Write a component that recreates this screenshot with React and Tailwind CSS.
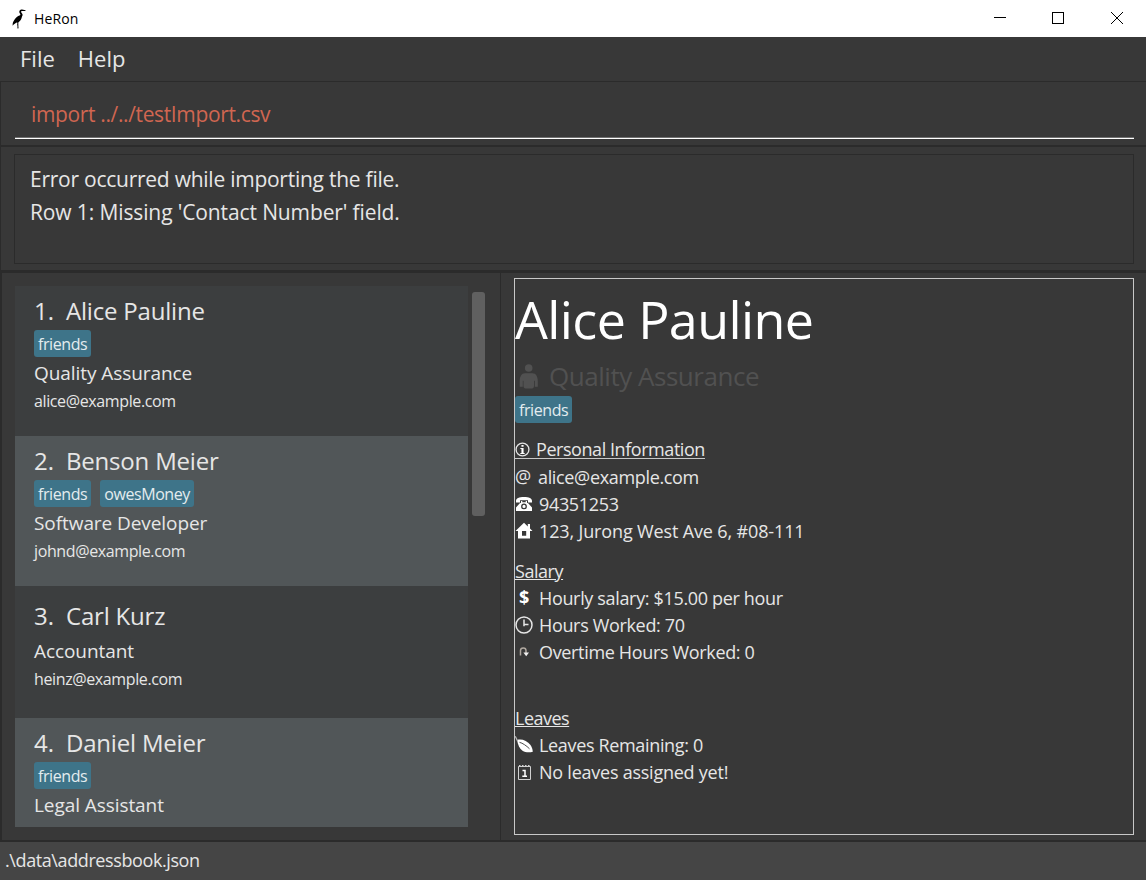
const people = [
  { n: 1, name: 'Alice Pauline', tags: ['friends'], role: 'Quality Assurance', email: 'alice@example.com', box: 'h-[150px] pt-[6px] bg-[#3c3e3f]' },
  { n: 2, name: 'Benson Meier', tags: ['friends', 'owesMoney'], role: 'Software Developer', email: 'johnd@example.com', box: 'h-[150px] pt-[6px] bg-[#515658]' },
  { n: 3, name: 'Carl Kurz', tags: [], role: 'Accountant', email: 'heinz@example.com', box: 'h-[132px] pt-[11px] bg-[#3c3e3f]' },
  { n: 4, name: 'Daniel Meier', tags: ['friends'], role: 'Legal Assistant', email: '', box: 'h-[109px] pt-[6px] bg-[#515658]' },
];

function Tag({ children }) {
  return (
    <span className="flex h-[27px] items-center rounded-[3px] bg-[#3e7489] px-1 text-[16px] leading-none tracking-[-0.42px] text-[#e3ecef]">
      {children}
    </span>
  );
}

function Card({ p }) {
  return (
    <div className={`flex shrink-0 flex-col overflow-hidden pl-[19px] text-[#e6e6e6] ${p.box}`}>
      <div className="flex h-[38px] shrink-0 items-center text-[24px] leading-[38px]">
        <span className="w-8">{p.n}.</span>
        <span className="tracking-[-0.2px]">{p.name}</span>
      </div>
      {p.tags.length > 0 && (
        <div className="flex h-[27px] shrink-0 gap-[9px]">
          {p.tags.map((t) => <Tag key={t}>{t}</Tag>)}
        </div>
      )}
      <div className="h-[32px] shrink-0 text-[19px] leading-[32px] tracking-[-0.07px]">{p.role}</div>
      <div className="h-[25px] shrink-0 text-[16px] leading-[24px] tracking-[-0.38px]">{p.email}</div>
    </div>
  );
}

function Row({ icon, tracking = 'tracking-[-0.34px]', children }) {
  return (
    <div className="flex h-[27px] items-center">
      <span className="flex w-6 shrink-0 items-center">{icon}</span>
      <span className={`whitespace-nowrap pt-[2px] leading-[25px] ${tracking}`}>{children}</span>
    </div>
  );
}

const Heron = () => (
  <svg width="14" height="20" viewBox="0 0 14 20" fill="#000">
    <path d="M7.300 2.600C7.500 1 8.800.3 10 .6L13.500 1.300v.7l-3.300.1C9.100 1.900 8.700 2.800 9.500 3.700c1.200 1.300 1.500 2.400.5 3.900-.4 2.400-1.800 4.700-3.700 5.800l.1 5.200.5.6H4.800l.8-.7-.4-3.200.3-1.500-.8-.2C3 14.500 1.500 15.700.7 16.800c-.3-2.100.2-3.900 1.300-5.400C3.400 9 5.400 7 8.100 6.200c.6-.4.3-1-.2-1.700-.5-.6-.7-1.100-.6-1.900z" />
  </svg>
);

const Person = () => (
  <svg width="20" height="26" viewBox="0 0 20 26" fill="#515151">
    <circle cx="9.700" cy="4" r="3.800" />
    <path d="M6 9.300h7.500c3.500 0 5.300 3.400 5.300 8v5.500h-3v-6h-.8v5.200c0 1.500-.8 2.500-2 2.500H6.500c-1.200 0-2-1-2-2.500v-5.200h-.7v6H.7v-5.500c0-4.600 1.800-8 5.300-8z" />
  </svg>
);

const Info = () => (
  <svg width="15" height="15" viewBox="0 0 14 14">
    <circle cx="7" cy="7" r="6" fill="none" stroke="#e6e6e6" strokeWidth="1.200" />
    <path d="M6 2.700h2v1.800H6zM5 5.500h3v4.700h1v1H5v-1h1V6.500H5z" fill="#fff" />
  </svg>
);

const Phone = () => (
  <svg width="18" height="16" viewBox="0 0 18 16" fill="#fff">
    <path d="M1 6.500V5C1 2.200 4 1 9 1s8 1.200 8 4v1.500h-4V4.300H5v2.200z" />
    <path fillRule="evenodd" d="M4.800 7.200 6 6.800V5h1.300v1.200h3.400V5H12v1.800l1.200.4L17 11.500V15H1v-3.500zM9 7.500a2.900 2.900 0 1 0 0 5.800 2.900 2.900 0 0 0 0-5.800zm0 1.300a1.600 1.600 0 1 1 0 3.200 1.600 1.600 0 0 1 0-3.200z" />
  </svg>
);

const House = () => (
  <svg width="18" height="18" viewBox="0 0 18 18" fill="#fff">
    <path fillRule="evenodd" d="M9 .8.5 9H3v7.500h12V9h2.500L15 6.600V2h-2.200v2.500zM7 9h4.200v4.700H7z" />
  </svg>
);

const Clock = () => (
  <svg width="18" height="18" viewBox="0 0 18 18" fill="none" stroke="#e6e6e6" strokeWidth="1.500">
    <circle cx="9" cy="9" r="8" />
    <path d="M9 3.500v6.700M9 8.500h4.500" />
  </svg>
);

const Loop = () => (
  <svg width="18" height="18" viewBox="0 0 18 18">
    <path d="M5.500 12.500V7.500c0-3.500 5.500-3.500 5.500 0V10" fill="none" stroke="#b0a8a0" strokeWidth="1.500" />
    <path d="M8.400 9.500h5.600L11.200 13.300z" fill="#f0f0f0" />
  </svg>
);

const Leaf = () => (
  <svg width="18" height="18" viewBox="0 0 18 18">
    <path d="M2 4C6.500 2.500 12 4.500 15.500 9c1.300 1.700 2 4 2.300 6.800-3.500 1-7.500.7-10.300-1C4.200 12.500 3 8.500 2 4z" fill="#fff" />
    <path d="M.3.300 2.500 5" stroke="#bbb" strokeWidth="1.200" />
    <path d="M4.500 6.300c3 .8 7 3.400 10 6.500" stroke="#383838" strokeWidth=".9" fill="none" />
  </svg>
);

const Calendar = () => (
  <svg width="18" height="18" viewBox="0 0 18 18" fill="none" stroke="#d0d0d0">
    <path d="M3.500 3.500h12v13h-12z" />
    <path d="M4 2.500h11" strokeDasharray="1.500 1.500" />
    <path d="M7.500 7.500H10v5.500M7.300 13.300H12" stroke="#fff" strokeWidth="1.500" />
  </svg>
);

export default function App() {
  return (
    <div className="flex h-[880px] w-[1146px] flex-col overflow-hidden bg-[#383838] font-['Open_Sans','Noto_Sans',sans-serif] text-[#e6e6e6]">
      <header className="flex h-[37px] shrink-0 items-center bg-white text-black">
        <span className="ml-3 flex w-[22px]"><Heron /></span>
        <span className="text-[14px] tracking-[0.15px]">HeRon</span>
        <svg className="ml-auto" width="160" height="37" viewBox="0 0 160 37" fill="none" stroke="#000" shapeRendering="crispEdges">
          <path d="M8 17.500h12M66.500 12.500h11v11h-11z" />
          <path d="m125 12 12 12M137 12l-12 12" shapeRendering="auto" />
        </svg>
      </header>

      <nav className="flex h-[44px] shrink-0 items-center gap-[23px] pb-[2px] pl-5 text-[22px] leading-none">
        <span>File</span>
        <span>Help</span>
      </nav>

      <section className="flex h-[65px] shrink-0 flex-col border-b border-l border-t border-[#2b2b2b] pl-[14px] pr-[12px]">
        <div className="flex h-[55px] shrink-0 items-center pl-4 pt-[11px] text-[21px] tracking-[-0.36px] text-[#d06651]">import ../../testImport.csv</div>
        <div className="h-[2px] shrink-0 border-b border-white bg-[#707070]" />
      </section>

      <section className="flex h-[125px] shrink-0 border-b border-l border-t border-[#2b2b2b] pb-[6px] pl-[13px] pr-[12px] pt-[7px]">
        <div className="flex-1 border border-[#2b2b2b] pl-[15px] pt-[8px] text-[21px] leading-[33px]">
          <p className="tracking-[-0.25px]">Error occurred while importing the file.</p>
          <p className="tracking-[-0.12px]">Row 1: Missing 'Contact Number' field.</p>
        </div>
      </section>

      <main className="flex h-[571px] shrink-0 border-b-2 border-t-2 border-[#2b2b2b]">
        <div className="flex w-[501px] shrink-0 border-l-2 border-r border-[#2b2b2b] pl-[13px] pt-[13px]">
          <div className="flex h-[541px] w-[453px] flex-col overflow-hidden">
            {people.map((p) => <Card key={p.n} p={p} />)}
          </div>
          <div className="ml-1 mt-[6px] h-[224px] w-[13px] rounded-[3px] bg-[#606060]" />
        </div>
        <div className="ml-[13px] mt-[5px] flex h-[557px] w-[620px] flex-col border border-[#c8c8c8] text-[18px] leading-[27px]">
          <h1 className="h-[82px] shrink-0 text-[52px] leading-[79px] tracking-[-0.6px] text-white">Alice Pauline</h1>
          <div className="flex h-[35px] shrink-0 items-center pb-[4px] pl-[4px] text-[26px] text-[#515151]">
            <span className="w-[30px]"><Person /></span>
            <span className="tracking-[-0.47px]">Quality Assurance</span>
          </div>
          <div className="flex"><Tag>friends</Tag></div>
          <div className="mt-[13px] flex h-[27px] items-center">
            <span className="flex h-[19px] items-center gap-[6px] border-b border-[#c8c8c8] leading-[20px] tracking-[-0.44px]"><Info />Personal Information</span>
          </div>
          <Row icon={<span className="text-[18px]">@</span>}><span className="-ml-px">alice@example.com</span></Row>
          <Row icon={<Phone />}>94351253</Row>
          <Row icon={<House />} tracking="tracking-[-0.14px]">123, Jurong West Ave 6, #08-111</Row>
          <div className="mt-[14px] h-[26px] tracking-[-0.45px] underline">Salary</div>
          <Row icon={<span className="pl-1 font-bold text-white">$</span>}>Hourly salary: $15.00 per hour</Row>
          <Row icon={<Clock />}>Hours Worked: 70</Row>
          <Row icon={<Loop />}>Overtime Hours Worked: 0</Row>
          <div className="mt-[40px] h-[26px] tracking-[-0.5px] underline">Leaves</div>
          <Row icon={<Leaf />}>Leaves Remaining: 0</Row>
          <Row icon={<Calendar />} tracking="tracking-[-0.24px]">No leaves assigned yet!</Row>
        </div>
      </main>

      <footer className="flex flex-1 items-center bg-[#454545] pb-[2px] pl-[5px] text-[18px] tracking-[-0.4px]">.\data\addressbook.json</footer>
    </div>
  );
}
